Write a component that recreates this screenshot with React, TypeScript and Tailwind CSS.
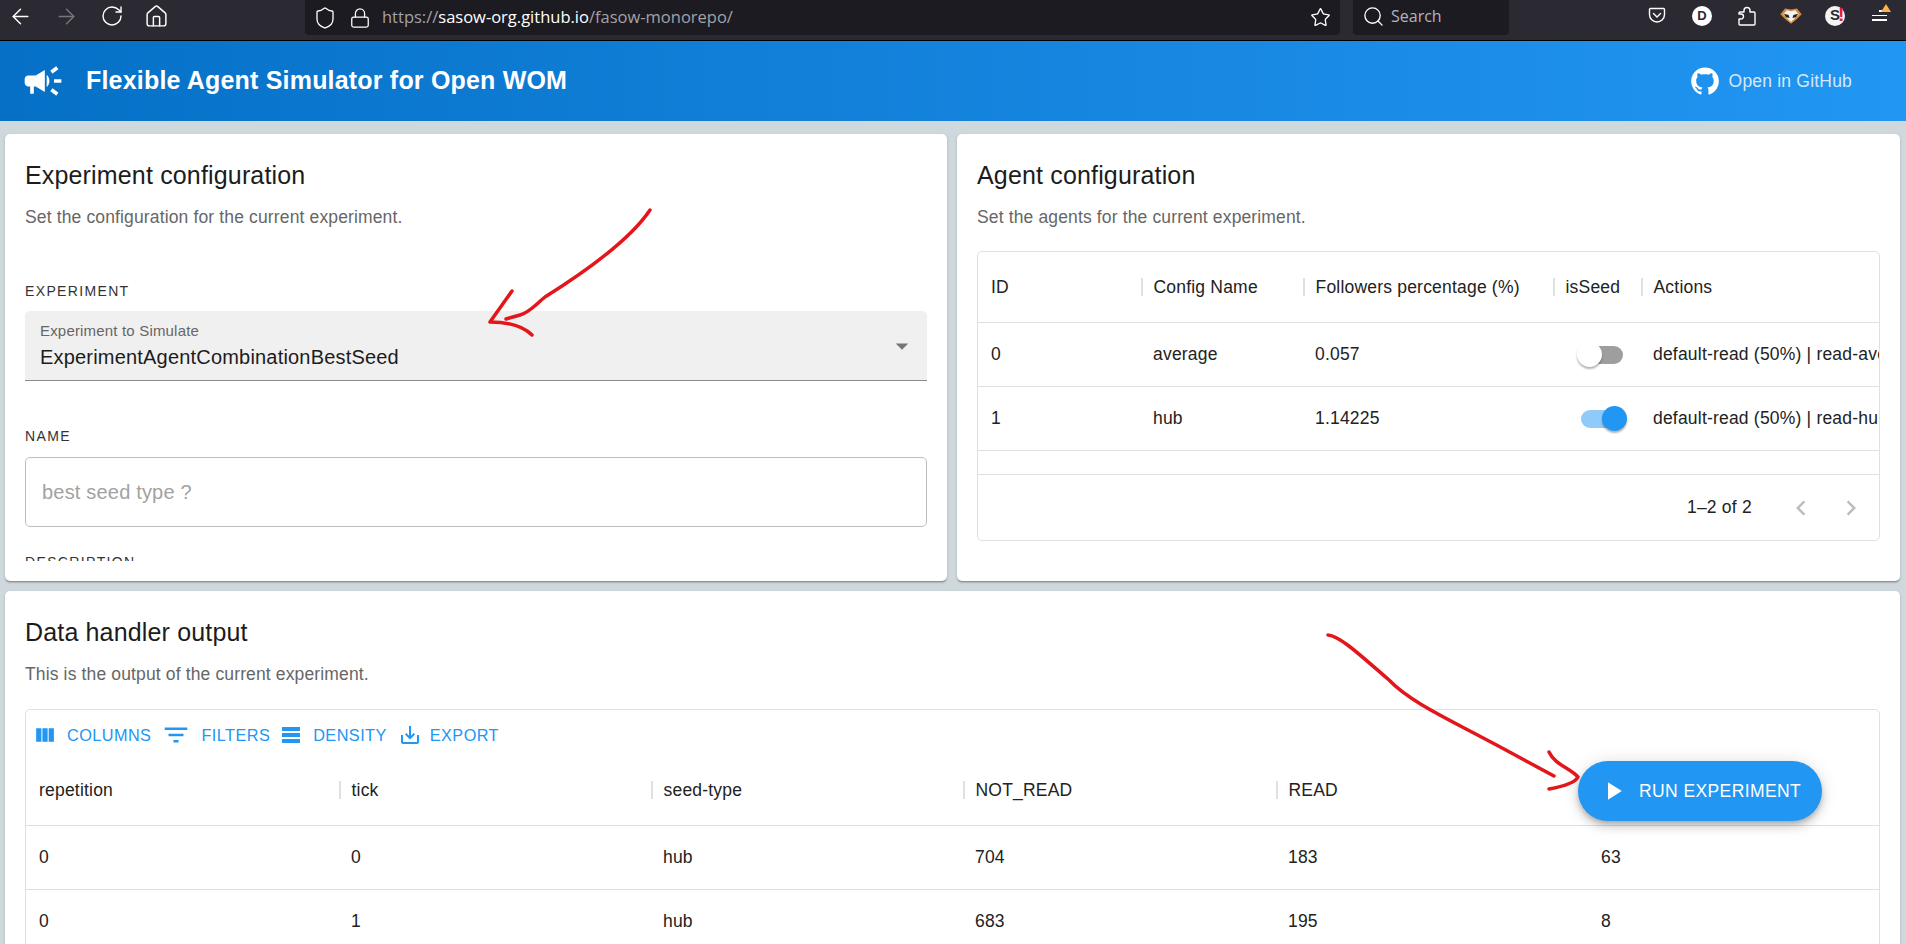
import React from 'react';
import { ArrowLeft, ArrowRight, RotateCw, Home, Shield, Lock, Star, Search } from 'lucide-react';

const Mui = ({ d, size, className }: { d: string; size: number; className?: string }) => (
  <svg viewBox="0 0 24 24" width={size} height={size} fill="currentColor" className={className}>
    <path d={d} />
  </svg>
);

const ICONS = {
  campaign:
    'M18 11v2h4v-2h-4zm-2 6.61c.96.71 2.21 1.65 3.2 2.39.4-.53.8-1.07 1.2-1.6-.99-.74-2.24-1.68-3.2-2.4-.4.54-.8 1.08-1.2 1.61zM20.4 5.6c-.4-.53-.8-1.07-1.2-1.6-.99.74-2.24 1.68-3.2 2.4.4.53.8 1.07 1.2 1.6.96-.72 2.21-1.65 3.2-2.4zM4 9c-1.1 0-2 .9-2 2v2c0 1.1.9 2 2 2h1v4h2v-4h1l5 3V6L8 9H4zm11.5 3c0-1.33-.58-2.53-1.5-3.35v6.69c.92-.81 1.5-2.01 1.5-3.34z',
  github:
    'M12 1.27a11 11 0 00-3.48 21.46c.55.09.73-.28.73-.55v-1.84c-3.03.64-3.67-1.46-3.67-1.46-.55-1.29-1.28-1.65-1.28-1.65-.92-.65.1-.65.1-.65 1.1 0 1.73 1.1 1.73 1.1.92 1.65 2.57 1.2 3.21.92a2 2 0 01.64-1.47c-2.47-.27-5.04-1.19-5.04-5.5 0-1.1.46-2.1 1.2-2.84a3.76 3.76 0 010-2.93s.91-.28 3.11 1.1c1.8-.49 3.7-.49 5.5 0 2.1-1.38 3.02-1.1 3.02-1.1a3.76 3.76 0 010 2.93c.83.74 1.2 1.74 1.2 2.94 0 4.21-2.57 5.13-5.04 5.4.45.37.82.92.82 2.02v3.03c0 .27.1.64.73.55A11 11 0 0012 1.27',
  columns: 'M10 18h5V5h-5v13zm-6 0h5V5H4v13zM16 5v13h5V5h-5z',
  filter: 'M10 18h4v-2h-4v2zM3 6v2h18V6H3zm3 7h12v-2H6v2z',
  density: 'M21 8H3V4h18v4zm0 2H3v4h18v-4zm0 6H3v4h18v-4z',
  exportIcon: 'M19 12v7H5v-7H3v7c0 1.1.9 2 2 2h14c1.1 0 2-.9 2-2v-7h-2zm-6 .67l2.59-2.58L17 11.5l-5 5-5-5 1.41-1.41L11 12.67V3h2z',
  play: 'M8 5v14l11-7z',
  drop: 'M7 10l5 5 5-5z',
  prev: 'M15.41 7.41L14 6l-6 6 6 6 1.41-1.41L10.83 12z',
  next: 'M10 6L8.59 7.41 13.17 12l-4.58 4.59L10 18l6-6z',
};

const BrowserBar = () => (
  <div className="flex h-[41px] shrink-0 items-start border-b border-black bg-[#2b2a33] font-['Open_Sans',sans-serif] text-white">
    <div className="flex h-[32px] w-[305px] items-center pl-[8px]">
      <ArrowLeft size={25} strokeWidth={1.4} />
      <ArrowRight size={25} strokeWidth={1.4} className="ml-[21px] text-[#77767c]" />
      <RotateCw size={24} strokeWidth={1.4} className="ml-[21px]" />
      <Home size={25} strokeWidth={1.4} className="ml-[20px]" />
    </div>
    <div className="flex h-[35px] w-[1035px] items-center rounded-b-[4px] bg-[#1c1b22] pl-[8px]">
      <Shield size={24} strokeWidth={1.3} />
      <Lock size={22} strokeWidth={1.4} className="ml-[12px]" />
      <span className="ml-[11px] text-[16.5px] text-[#a3a2a7]">
        https://<span className="text-white">sasow-org.github.io</span>/fasow-monorepo/
      </span>
      <Star size={21} strokeWidth={1.5} className="ml-auto mr-[9px]" />
    </div>
    <div className="ml-[13px] flex h-[35px] w-[156px] items-center rounded-b-[4px] bg-[#1c1b22] pb-[3px] pl-[9px] text-[16px] text-[#b5b4b8]">
      <Search size={23} strokeWidth={1.4} className="text-white" />
      <span className="ml-[6px]">Search</span>
    </div>
    <div className="flex h-[31px] flex-1 items-center pl-[139px]">
      <svg viewBox="0 0 18 17" width={18} height={17} fill="none" stroke="#fff" strokeWidth={1.4}>
        <path d="M2.5 1.5h13a1 1 0 0 1 1 1v5a7.5 7.5 0 0 1-15 0v-5a1 1 0 0 1 1-1z" />
        <path d="M5.5 6.5L9 10l3.5-3.5" strokeLinecap="round" />
      </svg>
      <span className="ml-[26px] flex h-[20px] w-[20px] items-center justify-center rounded-full bg-white font-['Liberation_Sans',sans-serif] text-[13px] font-bold text-[#2b2a33]">
        D
      </span>
      <svg viewBox="0 0 18 20" width={18} height={20} fill="none" stroke="#fff" strokeWidth={1.4} strokeLinejoin="round" className="ml-[26px]">
        <path d="M6 4.5a3 3 0 0 1 6 0V6h4a1 1 0 0 1 1 1v11a1 1 0 0 1-1 1H2a1 1 0 0 1-1-1v-5h2a2.5 2.5 0 0 0 0-5H1V7a1 1 0 0 1 1-1h4z" />
      </svg>
      <svg viewBox="0 0 20 16" width={24} height={19} className="ml-[23px]">
        <path d="M1 7l4-5 5 1 5-1 4 5-4 4-5 4-5-4z" fill="#d98a3c" />
        <path d="M3.5 7l3-3.5 3.5 1 3.5-1 3 3.5-3 3-3.5 3.5-3.5-3.5z" fill="#f3f3f3" />
        <path d="M4 6.5l4 1 .8 2.5-3-.6zM16 6.5l-4 1-.8 2.5 3-.6z" fill="#222" />
      </svg>
      <span className="relative ml-[22px] flex h-[20px] w-[20px] items-center justify-center rounded-full bg-[#f4f4f5] font-['Liberation_Sans',sans-serif] text-[15px] font-bold text-[#2b2a33]">
        S
        <span className="absolute left-[13px] top-[-2px] text-[19px] leading-[22px] text-[#e0212f]">!</span>
      </span>
      <div className="relative ml-[27px] flex w-[15px] flex-col items-end gap-[3px]">
        <span className="h-[1.5px] w-[8px] bg-white" />
        <span className="h-[1.5px] w-[15px] bg-white" />
        <span className="h-[1.5px] w-[15px] bg-white" />
        <svg viewBox="0 0 10 8" width={10} height={8} className="absolute right-[-4px] top-[-6px]">
          <path d="M5 0l5 8H0z" fill="#ffb24c" />
        </svg>
      </div>
    </div>
  </div>
);

const Card = ({ title, subtitle, className, children }: { title: string; subtitle: string; className?: string; children: React.ReactNode }) => (
  <section className={`rounded-[5px] bg-white px-[20px] pt-[24px] shadow-[0_2px_2px_-1px_rgba(0,0,0,0.35),0_1px_3px_rgba(0,0,0,0.15)] ${className ?? ''}`}>
    <h2 className="text-[25px] leading-[34px] tracking-[0.16px] text-[#1c1c1c]">{title}</h2>
    <p className="mt-[13px] text-[17.5px] leading-[24px] tracking-[0.14px] text-[#666]">{subtitle}</p>
    {children}
  </section>
);

const FieldLabel = ({ children }: { children: React.ReactNode }) => (
  <div className="text-[14px] leading-[20px] tracking-[1.35px] text-[#333]">{children}</div>
);

const HeadCell = ({ label, first }: { label: string; first?: boolean }) => (
  <div className={`flex items-center text-[17.5px] tracking-[0.2px] text-[#222] ${first ? 'pl-[13px]' : ''}`}>
    {!first && <span className="mr-[11px] h-[18px] w-[1.5px] bg-[#e0e0e0]" />}
    {label}
  </div>
);

const Switch = ({ on }: { on: boolean }) => (
  <div className="relative h-[18px] w-[42px]">
    <div className={`h-full w-full rounded-full ${on ? 'bg-[#90caf9]' : 'bg-[#9e9e9e]'}`} />
    <div
      className={`absolute top-[-4px] h-[25px] w-[25px] rounded-full shadow-[0_2px_2px_rgba(0,0,0,0.3)] ${on ? 'right-[-4px] bg-[#2196f3]' : 'left-[-4px] bg-white'}`}
    />
  </div>
);

const agents = [
  { id: '0', name: 'average', pct: '0.057', seed: false, actions: 'default-read (50%) | read-average (50%)' },
  { id: '1', name: 'hub', pct: '1.14225', seed: true, actions: 'default-read (50%) | read-hub (50%)' },
];

const AgentTable = () => (
  <div className="mt-[22px] h-[290px] overflow-hidden rounded-[5px] border border-[#e0e0e0]">
    <div className="grid h-[71px] grid-cols-[163px_162px_250px_88px_1fr] border-b border-[#e0e0e0]">
      <HeadCell label="ID" first />
      <HeadCell label="Config Name" />
      <HeadCell label="Followers percentage (%)" />
      <HeadCell label="isSeed" />
      <HeadCell label="Actions" />
    </div>
    {agents.map(a => (
      <div key={a.id} className="grid h-[64px] grid-cols-[163px_162px_250px_88px_1fr] items-center border-b border-[#e0e0e0] text-[17.5px] tracking-[0.2px] text-[#222] last:border-b-0">
        <div className="pl-[13px]">{a.id}</div>
        <div className="pl-[12px]">{a.name}</div>
        <div className="pl-[12px]">{a.pct}</div>
        <div className="flex justify-center pl-[9px]">
          <Switch on={a.seed} />
        </div>
        <div className="overflow-hidden whitespace-nowrap pl-[12px]">{a.actions}</div>
      </div>
    ))}
    <div className="mt-[23px] flex h-[66px] items-center border-t border-[#e0e0e0] pl-[709px] text-[17.5px] tracking-[0.2px] text-[#222]">
      <span>1–2 of 2</span>
      <Mui d={ICONS.prev} size={30} className="ml-[34px] text-[#bdbdbd]" />
      <Mui d={ICONS.next} size={30} className="ml-[20px] text-[#bdbdbd]" />
    </div>
  </div>
);

const toolbar = [
  { label: 'COLUMNS', icon: ICONS.columns, size: 25, ml: 'ml-0', textMl: 'ml-[10px]' },
  { label: 'FILTERS', icon: ICONS.filter, size: 30, ml: 'ml-[10px]', textMl: 'ml-[10px]' },
  { label: 'DENSITY', icon: ICONS.density, size: 24, ml: 'ml-[9px]', textMl: 'ml-[10px]' },
  { label: 'EXPORT', icon: ICONS.exportIcon, size: 24, ml: 'ml-[11px]', textMl: 'ml-[8px]' },
];

const outputCols = ['repetition', 'tick', 'seed-type', 'NOT_READ', 'READ'];
const outputRows = [
  ['0', '0', 'hub', '704', '183', '63'],
  ['0', '1', 'hub', '683', '195', '8'],
];

const OutputTable = () => (
  <div className="mt-[23px] rounded-t-[5px] border border-[#e0e0e0]">
    <div className="flex h-[50px] items-center pl-[6px] text-[16.25px] tracking-[0.45px] text-[#2196f3]">
      {toolbar.map(t => (
        <div key={t.label} className={`flex items-center ${t.ml}`}>
          <Mui d={t.icon} size={t.size} />
          <span className={t.textMl}>{t.label}</span>
        </div>
      ))}
    </div>
    <div className="grid h-[66px] grid-cols-[313px_312px_312px_313px_313px_1fr] border-b border-[#e0e0e0] pb-[5px]">
      {outputCols.map((c, i) => (
        <HeadCell key={c} label={c} first={i === 0} />
      ))}
    </div>
    {outputRows.map((r, i) => (
      <div key={i} className="grid h-[64px] grid-cols-[313px_312px_312px_313px_313px_1fr] items-center border-b border-[#e0e0e0] text-[17.5px] tracking-[0.2px] text-[#222]">
        {r.map((v, j) => (
          <div key={j} className={j === 0 ? 'pl-[13px]' : 'pl-[12px]'}>
            {v}
          </div>
        ))}
      </div>
    ))}
  </div>
);

const App: React.FC = () => (
  <div className="relative flex h-screen flex-col overflow-hidden bg-[#cfd8dc] font-['Liberation_Sans',Arial,sans-serif]">
    <BrowserBar />
    <header className="flex h-[80px] shrink-0 items-center bg-gradient-to-r from-[#0570c6] to-[#2196f3] pl-[21px] pr-[54px] text-white">
      <Mui d={ICONS.campaign} size={44} />
      <h1 className="ml-[21px] text-[25px] font-bold tracking-[0.19px]">Flexible Agent Simulator for Open WOM</h1>
      <a className="ml-auto flex items-center text-[17.5px] tracking-[0.2px] text-[#d5e9fb]">
        <Mui d={ICONS.github} size={30} className="text-white" />
        <span className="ml-[9px]">Open in GitHub</span>
      </a>
    </header>

    <main className="flex flex-1 flex-col gap-[10px] pl-[5px] pr-[6px] pt-[13px]">
      <div className="grid h-[447px] shrink-0 grid-cols-[942px_943px] gap-[10px]">
        <Card title="Experiment configuration" subtitle="Set the configuration for the current experiment.">
          <div className="mt-[52px] h-[280px] overflow-hidden">
            <FieldLabel>EXPERIMENT</FieldLabel>
            <div className="mt-[10px] flex h-[70px] items-center justify-between rounded-t-[5px] border-b border-[#8a8a8a] bg-[#f0f0f0] pl-[15px] pr-[10px]">
              <div>
                <div className="text-[15px] leading-[18px] tracking-[0.18px] text-[#666]">Experiment to Simulate</div>
                <div className="mt-[5px] text-[20px] leading-[24px] tracking-[0.19px] text-[#1c1c1c]">ExperimentAgentCombinationBestSeed</div>
              </div>
              <Mui d={ICONS.drop} size={30} className="text-[#757575]" />
            </div>
            <div className="mt-[45px]">
              <FieldLabel>NAME</FieldLabel>
            </div>
            <input
              readOnly
              placeholder="best seed type ?"
              className="mt-[11px] h-[70px] w-full rounded-[5px] border border-[#bdbdbd] px-[16px] text-[20px] tracking-[0.19px] placeholder:text-[#a2a2a2]"
            />
            <div className="mt-[25px]">
              <FieldLabel>DESCRIPTION</FieldLabel>
            </div>
          </div>
        </Card>
        <Card title="Agent configuration" subtitle="Set the agents for the current experiment.">
          <AgentTable />
        </Card>
      </div>

      <Card title="Data handler output" subtitle="This is the output of the current experiment." className="flex-1">
        <OutputTable />
      </Card>
    </main>

    {/* floating action button, sits over the table */}
    <button className="absolute left-[1578px] top-[761px] flex h-[60px] w-[244px] items-center rounded-full bg-[#2196f3] pl-[20px] text-[17.5px] tracking-[0.4px] text-white shadow-[0_3px_5px_-1px_rgba(0,0,0,0.2),0_6px_10px_rgba(0,0,0,0.14),0_1px_18px_rgba(0,0,0,0.12)]">
      <Mui d={ICONS.play} size={30} />
      <span className="ml-[11px]">RUN EXPERIMENT</span>
    </button>

    {/* hand drawn annotations on top of the screenshot */}
    <svg className="pointer-events-none absolute left-0 top-0" width={1906} height={944} fill="none" stroke="#e3161b" strokeWidth={3.5} strokeLinecap="round" strokeLinejoin="round">
      <path d="M650 210C630 240 580 275 545 297C535 305 530 312 520 315L506 319" />
      <path d="M512 291L490 322C505 322 522 325 532 335" />
      <path d="M1328 635C1340 636 1360 655 1389 680C1410 702 1450 720 1487 740C1510 752 1535 766 1554 776" />
      <path d="M1549 752C1555 765 1570 768 1578 777C1575 783 1560 787 1549 789" />
    </svg>
  </div>
);

export default App;
